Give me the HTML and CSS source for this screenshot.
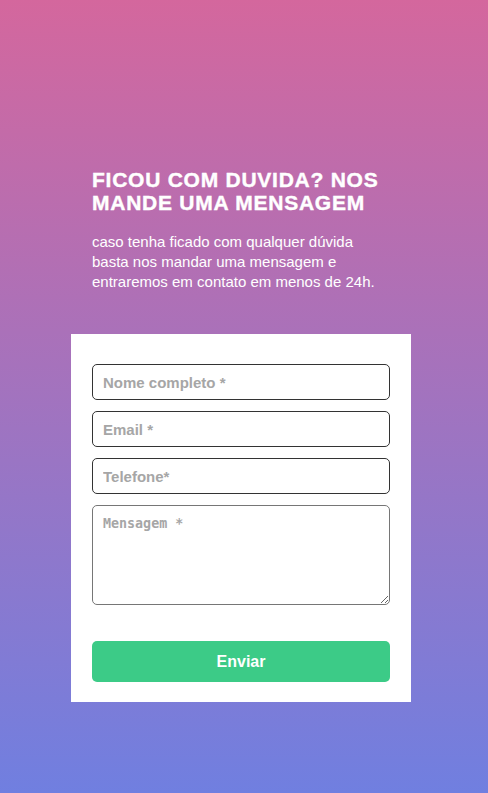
FILE: index.html
```html
<!DOCTYPE html>
<html lang="pt-BR">
<head>
<meta charset="utf-8">
<title>Contato</title>
<link rel="stylesheet" href="styles.css">
</head>
<body>
<main class="page">
  <section class="intro">
    <h1 class="title">FICOU COM DUVIDA? NOS MANDE UMA MENSAGEM</h1>
    <p class="lead">caso tenha ficado com qualquer dúvida basta nos mandar uma mensagem e entraremos em contato em menos de 24h.</p>
  </section>
  <form class="card">
    <input class="field" type="text" placeholder="Nome completo *">
    <input class="field" type="email" placeholder="Email *">
    <input class="field" type="tel" placeholder="Telefone*">
    <textarea class="field area" placeholder="Mensagem *"></textarea>
    <button class="send" type="button">Enviar</button>
  </form>
</main>
</body>
</html>
```
FILE: styles.css
```css
html, body {
  margin: 0;
  padding: 0;
  height: 100%;
}
body {
  background: linear-gradient(to bottom, #d4679d 0%, #707fe0 100%);
  font-family: "Liberation Sans", Arial, sans-serif;
}
.page {
  display: flex;
  flex-direction: column;
  width: 340px;
  margin-left: 71px;
  padding-top: 168px;
}
.intro {
  color: #fff;
  padding: 0 21px;
}
.title {
  margin: 0;
  font-size: 21px;
  line-height: 23px;
  font-weight: 700;
  letter-spacing: 0.75px;
  -webkit-text-stroke: 0.4px #fff;
}
.lead {
  margin: 18px 0 0;
  font-size: 15px;
  line-height: 20px;
}
.card {
  margin-top: 42px;
  background: #fff;
  padding: 30px 21px 20px;
  display: flex;
  flex-direction: column;
  gap: 11px;
}
.field {
  box-sizing: border-box;
  width: 298px;
  height: 36px;
  border: 1px solid #333;
  border-radius: 5px;
  padding: 0 10px;
  font-family: "Liberation Sans", Arial, sans-serif;
  font-size: 15px;
  font-weight: 700;
  margin: 0;
}
.field::placeholder {
  color: #a6a6a6;
}
.area {
  height: 100px;
  padding: 10px;
  font-family: "DejaVu Sans Mono", monospace;
  font-size: 13.333px;
  font-weight: 700;
  resize: vertical;
  border-color: #767676;
}
.send {
  margin-top: 25px;
  height: 41px;
  border: 0;
  border-radius: 5px;
  background: #3ccb87;
  color: #fff;
  font-family: "Liberation Sans", Arial, sans-serif;
  font-size: 16px;
  font-weight: 700;
}
```
